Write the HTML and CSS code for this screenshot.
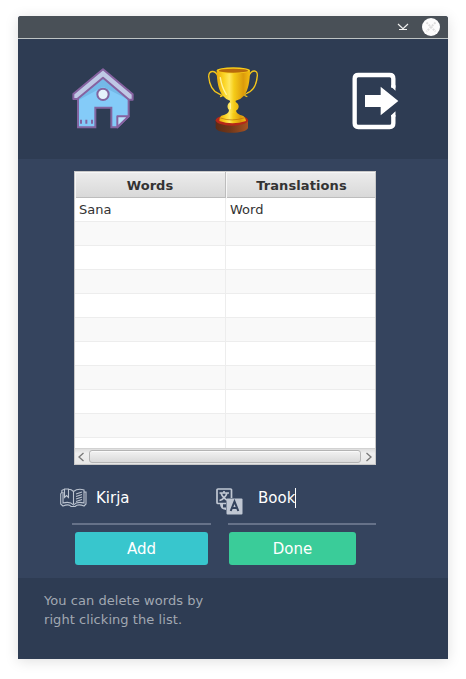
FILE: index.html
```html
<!DOCTYPE html>
<html lang="en">
<head>
<meta charset="utf-8">
<title>Word list</title>
<link rel="stylesheet" href="styles.css">
</head>
<body>
<div class="window">
  <div class="titlebar">
    <svg class="minimize" width="12" height="8" viewBox="0 0 12 8"><path d="M1 1l5 4.700L11 1M2 6.500h8" /></svg>
    <svg class="close" width="18" height="18" viewBox="0 0 18 18"><circle cx="9" cy="9" r="9"/><path d="M4.500 4.500l9 9M13.500 4.500l-9 9"/></svg>
  </div>
  <nav class="toolbar">
    <svg width="84" height="80" viewBox="0 0 252 240">
      <path d="M48 93L123 40L200 93V169L166 202H148V143H100V202H48Z" fill="#84cbf8" stroke="#8265a0" stroke-width="6"/>
      <path d="M51 103L123 50L197 103V118L123 80L51 120Z" fill="#74b9e8"/>
      <path d="M123 28L212 103V119H201L123 53L46 117H34V102Z" fill="#bfc8e5" stroke="#8662a0" stroke-width="6" stroke-linejoin="round"/>
      <circle cx="123" cy="103" r="17" fill="#e4f2fc" stroke="#8265a0" stroke-width="6"/>
      <path d="M166 202V169H200Z" fill="#b9e2fa" stroke="#8662a0" stroke-width="6" stroke-linejoin="round"/>
      <path d="M57 179v12M73 179v12M90 179v12" stroke="#8265a0" stroke-width="6"/>
    </svg>
    <svg width="76" height="80" viewBox="0 0 228 240">
      <defs>
        <linearGradient id="gold"><stop offset="0" stop-color="#e9a90c"/><stop offset=".22" stop-color="#fbd524"/><stop offset=".38" stop-color="#ffe860"/><stop offset=".52" stop-color="#f5cc18"/><stop offset=".8" stop-color="#dc9b0b"/><stop offset="1" stop-color="#f4bd12"/></linearGradient>
        <linearGradient id="wood"><stop offset="0" stop-color="#5b2b16"/><stop offset=".45" stop-color="#713719"/><stop offset="1" stop-color="#a65322"/></linearGradient>
      </defs>
      <path d="M68 46C59 29 41 31 41 50C43 72 51 93 71 101C84 107 85 108 75 110M162 46C171 28 188 29 187 47C185 71 176 92 157 99C146 104 146 107 157 110" fill="none" stroke="#f4c51a" stroke-width="4"/>
      <path d="M62 180V204C66 223 154 223 159 204V180Z" fill="url(#wood)"/>
      <ellipse cx="110.500" cy="181" rx="48.500" ry="16" fill="#b52819"/>
      <path d="M102 150Q102 163 79 167Q73 171 73 183Q112 197 153 183Q151 170 143 167Q123 163 123 150Z" fill="url(#gold)"/>
      <path d="M76 174Q110 186 150 173" fill="none" stroke="#b86d0b" stroke-width="2"/>
      <path d="M65 31C65 62 70 92 84 108Q93 119 105 122V126C95 132 95 147 106 152V159H122V152C134 147 134 132 122 126V122Q138 118 147 107C160 92 165 62 165 31Z" fill="url(#gold)"/>
      <ellipse cx="115" cy="31" rx="50" ry="9" fill="#f7cb18"/>
      <ellipse cx="115" cy="32" rx="44" ry="6" fill="#b76a0d"/>
      <path d="M76 53Q80 82 94 103M106 131V146" stroke="#fff4a0" stroke-width="4" fill="none" stroke-linecap="round"/>
    </svg>
    <svg width="76" height="80" viewBox="0 0 228 240">
      <path d="M160 83V56Q160 45 149 45H55Q44 45 44 56V190Q44 201 55 201H149Q160 201 160 190V165" fill="none" stroke="#fff" stroke-width="13"/>
      <path d="M153.500 76H166.500V92L153.500 80ZM153.500 166L166.500 154V170H153.500Z" fill="#fff"/>
      <path d="M75 105H122V80L175 123L122 166V141H75Z" fill="#fff"/>
    </svg>
  </nav>
  <main>
    <div class="table">
      <div class="row head"><span>Words</span><span>Translations</span></div>
      <div class="rows">
        <div class="row"><span>Sana</span><span>Word</span></div>
        <div class="row"><span></span><span></span></div>
        <div class="row"><span></span><span></span></div>
        <div class="row"><span></span><span></span></div>
        <div class="row"><span></span><span></span></div>
        <div class="row"><span></span><span></span></div>
        <div class="row"><span></span><span></span></div>
        <div class="row"><span></span><span></span></div>
        <div class="row"><span></span><span></span></div>
        <div class="row"><span></span><span></span></div>
        <div class="row"><span></span><span></span></div>
      </div>
      <div class="scrollbar">
        <svg width="14" height="16" viewBox="0 0 14 16"><path d="M8.500 4L4 8l4.500 4"/></svg>
        <div class="thumb"></div>
        <svg width="14" height="16" viewBox="0 0 14 16"><path d="M5.500 4L10 8l-4.500 4"/></svg>
      </div>
    </div>
    <div class="fields">
      <div class="field word">
        <svg width="27" height="20" viewBox="0 0 27 20" fill="none" stroke="#bcc4d0" stroke-width="1.100"><path d="M4 1.500Q1 2 2 4L.7 6V16L3 18Q9 15.500 11 18.500H15Q18 15.500 24 18L26 16V4H24V2Q18 0 13.500 3.500Q11 1 8.500 1.200M4.500 1V9.500L6.500 7.500L8.500 9.500V1ZM3 4V15Q10 13 13.500 17Q17 13 24 15V3M13.500 4V16M16 6L22 4M16 8.500L22 6.500M16 11L22 9M16 13.500L22 11.500"/></svg>
        <span>Kirja</span>
      </div>
      <div class="field translation">
        <svg width="27" height="27" viewBox="0 0 27 27"><path d="M15.500 10V2Q15.500 1 14.500 1H2Q1 1 1 2V14.500Q1 15.500 2 15.500H10" fill="none" stroke="#c0c7d3" stroke-width="1.700"/><path d="M3.500 5H13M8 3V5M5 5Q7 11 12.500 12.500M11 5Q9 11 3.500 12.500" fill="none" stroke="#c0c7d3" stroke-width="1.700"/><path d="M4 16Q4 21.500 10 22V19.500H7V16Z" fill="#c0c7d3"/><rect x="10.500" y="10.500" width="16" height="16" rx="1" fill="#c0c7d3"/><path d="M14.700 23L18.500 13.500L22.300 23M16 20H21" fill="none" stroke="#34435d" stroke-width="2"/></svg>
        <span>Book</span><i class="caret"></i>
      </div>
    </div>
    <div class="buttons"><button class="add">Add</button><button class="done">Done</button></div>
  </main>
  <footer>You can delete words by<br>right clicking the list.</footer>
</div>
</body>
</html>
```
FILE: styles.css
```css
* { box-sizing: border-box; }
body { margin: 0; background: #fff; font-family: "DejaVu Sans", sans-serif; font-size: 13px; }
svg { display: block; flex: none; }
.window { width: 430px; height: 643px; margin: 16px 18px 20px; border-radius: 3px 3px 0 0; overflow: hidden; background: #35445e; box-shadow: 0 2px 14px rgba(0, 0, 0, .13); }
.titlebar { height: 23px; display: flex; align-items: center; justify-content: flex-end; gap: 13px; padding-right: 8px; background: #495057; border-bottom: 1px solid #bdc3c3; }
.minimize { fill: none; stroke: #f1f1f1; stroke-width: 1.2; }
.close circle { fill: #fcfcfc; }
.close path { stroke: #ddd; stroke-width: 2; stroke-dasharray: 2 1; }
.toolbar { height: 120px; display: flex; padding: 21px 0 0 44px; background: #2e3c53; }
.toolbar svg:nth-child(2) { margin-left: 49px; }
.toolbar svg:nth-child(3) { margin-left: 69px; }
main { height: 419px; padding-top: 12px; }
.table { width: 302px; height: 294px; margin-left: 56px; border: 1px solid #c8c8c8; background: #fff; color: #333; display: flex; flex-direction: column; }
.row { display: grid; grid-template-columns: 151px 1fr; height: 24px; line-height: 23px; border-bottom: 1px solid #ededed; }
.row span { padding-left: 4px; border-right: 1px solid #ededed; }
.row span:last-child { border-right: 0; }
.row:nth-child(even) { background: #f9f9f9; }
.row.head { flex: none; height: 26px; line-height: 27px; font-weight: bold; text-align: center; background: linear-gradient(#ececec, #d9d9d9); border-bottom: 1px solid #bdbdbd; }
.head span { padding: 0; border-right-color: #bdbdbd; box-shadow: inset 1px 1px #f7f7f7; }
.head span:last-child { padding-left: 2px; letter-spacing: .1px; }
.rows { height: 250px; overflow: hidden; }
.scrollbar { height: 16px; display: flex; align-items: center; background: linear-gradient(#dedede, #efefef 30%, #e6e6e6); border-top: 1px solid #d2d2d2; }
.scrollbar svg { fill: none; stroke: #777; stroke-width: 1.3; }
.thumb { width: 272px; height: 13px; border: 1px solid #b4b4b4; border-radius: 3px; background: linear-gradient(#f2f2f2, #dadada); box-shadow: inset 0 1px #fafafa; }
.fields { display: flex; height: 60px; padding: 18px 0 0 42px; font-size: 15px; color: #fff; }
.field { display: flex; height: 42px; align-items: flex-start; background: linear-gradient(#667289, #667289) 100% 100% / 100% 2px no-repeat; }
.field span { line-height: 30px; }
.field svg { margin-top: 5px; }
.word { width: 151px; background-size: 139px 2px; }
.word span { margin-left: 9px; }
.translation { width: 160px; margin-left: 5px; background-size: 148px 2px; }
.translation span { margin-left: 15px; }
.caret { width: 1px; height: 20px; margin-top: 5px; background: #fff; }
.buttons { display: flex; gap: 21px; padding: 7px 0 0 57px; }
button { height: 33px; padding: 1px 0 0; border: 0; border-radius: 3px; color: #fff; font: 15px/32px "DejaVu Sans", sans-serif; }
.add { width: 133px; background: #38c6cd; }
.done { width: 127px; background: #3acc99; }
footer { height: 81px; padding: 13px 26px; background: #2e3c53; color: #a1a8b2; line-height: 19px; letter-spacing: .06px; }
```
